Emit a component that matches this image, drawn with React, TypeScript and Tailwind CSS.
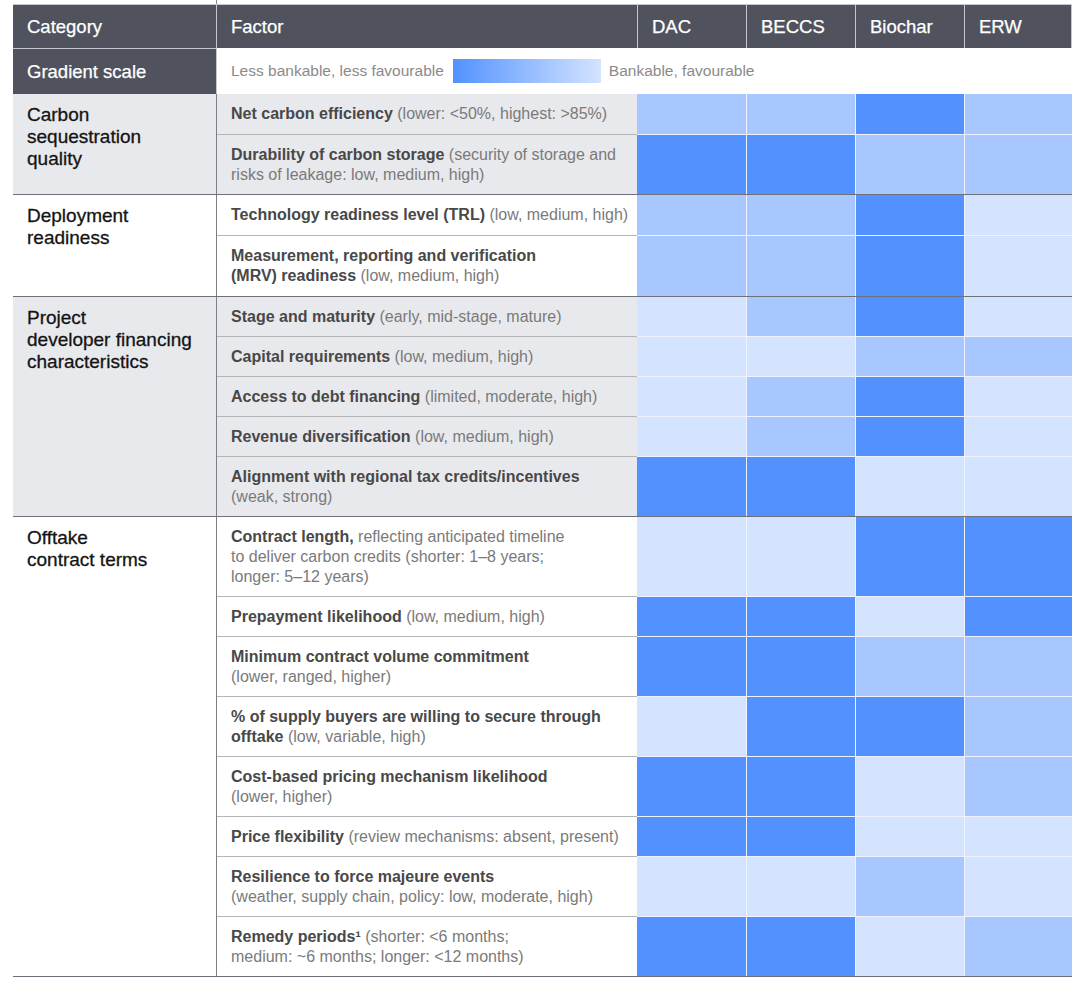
import React from 'react';

type Cell = 'D' | 'M' | 'L';

const cellBg: Record<Cell, string> = {
  D: 'bg-[#5291fe]',
  M: 'bg-[#a8c7fe]',
  L: 'bg-[#d4e3fe]',
};

type Row = { content: React.ReactNode; cells: string; tall?: boolean };
type Group = { cat: string[]; gray: boolean; rows: Row[] };

const B = ({ children }: { children: React.ReactNode }) => (
  <span className="font-bold text-[#484848]">{children}</span>
);

const groups: Group[] = [
  {
    cat: ['Carbon', 'sequestration', 'quality'],
    gray: true,
    rows: [
      { content: <><B>Net carbon efficiency</B> (lower: &lt;50%, highest: &gt;85%)</>, cells: 'MMDM', tall: true },
      { content: <><B>Durability of carbon storage</B> (security of storage and<br />risks of leakage: low, medium, high)</>, cells: 'DDMM' },
    ],
  },
  {
    cat: ['Deployment', 'readiness'],
    gray: false,
    rows: [
      { content: <><B>Technology readiness level (TRL)</B> (low, medium, high)</>, cells: 'MMDL', tall: true },
      { content: <><B>Measurement, reporting and verification</B><br /><B>(MRV) readiness</B> (low, medium, high)</>, cells: 'MMDL', tall: true },
    ],
  },
  {
    cat: ['Project', 'developer financing', 'characteristics'],
    gray: true,
    rows: [
      { content: <><B>Stage and maturity</B> (early, mid-stage, mature)</>, cells: 'LMDL' },
      { content: <><B>Capital requirements</B> (low, medium, high)</>, cells: 'LLMM' },
      { content: <><B>Access to debt financing</B> (limited, moderate, high)</>, cells: 'LMDL' },
      { content: <><B>Revenue diversification</B> (low, medium, high)</>, cells: 'LMDL' },
      { content: <><B>Alignment with regional tax credits/incentives</B><br />(weak, strong)</>, cells: 'DDLL' },
    ],
  },
  {
    cat: ['Offtake', 'contract terms'],
    gray: false,
    rows: [
      { content: <><B>Contract length,</B> reflecting anticipated timeline<br />to deliver carbon credits (shorter: 1–8 years;<br />longer: 5–12 years)</>, cells: 'LLDD' },
      { content: <><B>Prepayment likelihood</B> (low, medium, high)</>, cells: 'DDLD' },
      { content: <><B>Minimum contract volume commitment</B><br />(lower, ranged, higher)</>, cells: 'DDMM' },
      { content: <><B>% of supply buyers are willing to secure through</B><br /><B>offtake</B> (low, variable, high)</>, cells: 'LDDM' },
      { content: <><B>Cost-based pricing mechanism likelihood</B><br />(lower, higher)</>, cells: 'DDLM' },
      { content: <><B>Price flexibility</B> (review mechanisms: absent, present)</>, cells: 'DDLL' },
      { content: <><B>Resilience to force majeure events</B><br />(weather, supply chain, policy: low, moderate, high)</>, cells: 'LLML' },
      { content: <><B>Remedy periods¹</B> (shorter: &lt;6 months;<br />medium: ~6 months; longer: &lt;12 months)</>, cells: 'DDLM' },
    ],
  },
];

const heatW = ['w-[109px]', 'w-[109px]', 'w-[109px]', 'w-[108px]'];

export default function App() {
  return (
    <div
      className="w-[1080px] h-[985px] bg-white pl-[13px]"
      style={{ fontFamily: '"Liberation Sans", Arial, Helvetica, sans-serif' }}
    >
      {/* small line above header */}
      <div className="h-[4px] flex">
        <div className="w-[203px]" />
        <div className="w-px bg-[#8a8a8a]" />
      </div>

      {/* Header */}
      <div className="flex w-[1059px] h-[44px] bg-[#50535e] border-t border-[#c4c6cb] text-white text-[18.5px] [-webkit-text-stroke:0.25px_white]">
        <div className="w-[204px] border-r border-[#c4c6cb] flex items-center pl-[14px]">Category</div>
        <div className="w-[420px] flex items-center pl-[14px]">Factor</div>
        {['DAC', 'BECCS', 'Biochar', 'ERW'].map((h, i) => (
          <div
            key={h}
            className={`${heatW[i]} border-l border-[#c4c6cb] flex items-center pl-[14px] ${i === 3 ? 'border-r' : ''}`}
          >
            {h}
          </div>
        ))}
      </div>

      {/* Gradient row */}
      <div className="flex w-[1059px] h-[46px]">
        <div className="w-[204px] bg-[#50535e] border-t border-r border-[#c4c6cb] text-white text-[18.5px] [-webkit-text-stroke:0.25px_white] flex items-center pl-[14px]">
          Gradient scale
        </div>
        <div className="flex items-center pl-[14px] text-[15.5px] text-[#8a8a8a]">
          <span>Less bankable, less favourable</span>
          <div className="ml-[9px] w-[148px] h-[24px] bg-gradient-to-r from-[#5291fe] to-[#d4e3fe]" />
          <span className="ml-[8px]">Bankable, favourable</span>
        </div>
      </div>

      {/* Body groups */}
      {groups.map((g, gi) => (
        <div
          key={gi}
          className={`flex w-[1059px] border-b border-[#6e717a] ${g.gray ? 'bg-[#e8e9ec]' : 'bg-white'}`}
        >
          <div className="w-[204px] shrink-0 border-r border-[#7d7f85] pl-[14px] pt-[10px] text-[19px] leading-[22px] text-[#141414] [-webkit-text-stroke:0.3px_#141414]">
            {g.cat.map((c) => (
              <div key={c} className="whitespace-nowrap">{c}</div>
            ))}
          </div>
          <div className="flex flex-col">
            {g.rows.map((r, ri) => {
              const last = ri === g.rows.length - 1;
              return (
                <div key={ri} className="flex">
                  <div
                    className={`w-[420px] shrink-0 pl-[14px] ${r.tall ? 'pt-[10px] pb-[10px]' : 'pt-[10px] pb-[9px]'} text-[16px] leading-[20px] text-[#7a7a7a] whitespace-nowrap ${
                      last ? '' : 'border-b border-[#b4b5b8]'
                    }`}
                  >
                    {r.content}
                  </div>
                  {r.cells.split('').map((c, ci) => (
                    <div
                      key={ci}
                      className={`${heatW[ci]} ${cellBg[c as Cell]} ${ci > 0 ? 'border-l border-l-[#eef3ff]' : ''} ${
                        last ? '' : 'border-b border-b-[#eef3ff]'
                      }`}
                    />
                  ))}
                </div>
              );
            })}
          </div>
        </div>
      ))}
    </div>
  );
}
